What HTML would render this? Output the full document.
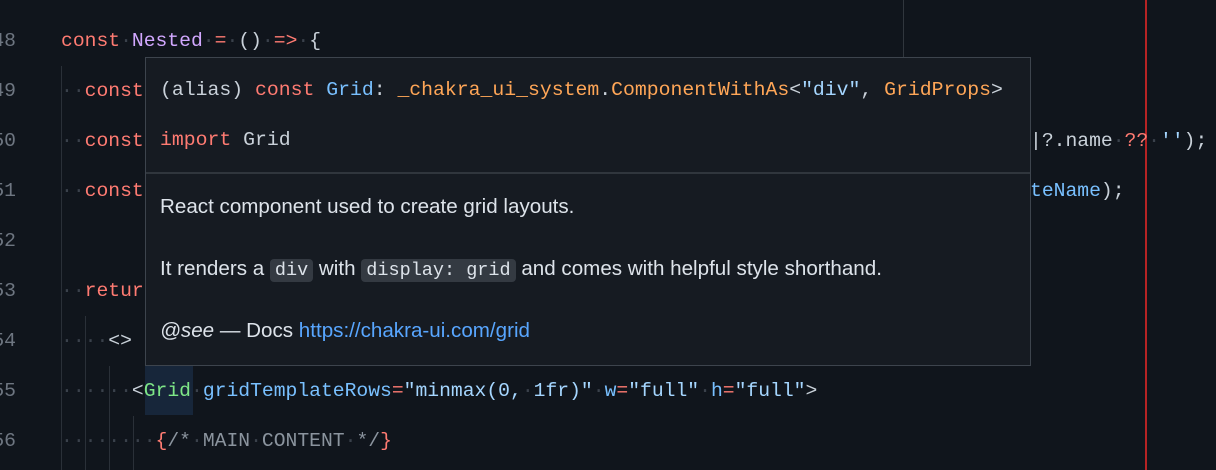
<!DOCTYPE html>
<html><head><meta charset="utf-8"><style>
body{margin:0;width:1216px;height:470px;overflow:hidden;background:#10151c;position:relative;font-family:"Liberation Mono",monospace;font-size:19.7px;color:#c9d1d9}
.l{position:absolute;left:61px;white-space:pre;line-height:24px}
.n{position:absolute;left:-14px;width:30px;text-align:right;color:#6e7681;line-height:24px}
.d{color:#3a414b}.k{color:#ff7b72}.f{color:#d2a8ff}.b{color:#79c0ff}.s{color:#a5d6ff}.g{color:#7ee787}.o{color:#ffa657}.c{color:#8b949e}
.gd{position:absolute;width:1px;background:#2a3038}
#pop{position:absolute;left:145px;top:57px;width:884px;height:307px;background:#161b22;border:1px solid #3d444d}
.pc{position:absolute;left:14px;white-space:pre;font-size:19.8px}
.pr{position:absolute;left:14px;font-family:"Liberation Sans",sans-serif;font-size:20.6px;color:#dde3ea;white-space:pre}
code{font-family:"Liberation Mono",monospace;font-size:18.5px;background:#343a42;border-radius:4px;padding:1px 5px}
</style></head><body>
<div class="gd" style="left:61px;top:66px;height:404px"></div>
<div class="gd" style="left:85px;top:316px;height:154px"></div>
<div class="gd" style="left:109px;top:366px;height:104px"></div>
<div class="gd" style="left:133px;top:416px;height:54px"></div>
<div class="gd" style="left:903px;top:0;height:57px;background:#30363d"></div>
<div style="position:absolute;left:1145px;top:0;width:2px;height:470px;background:#b62324"></div>
<div style="position:absolute;left:145px;top:366px;width:48px;height:49px;background:#17263a"></div>

<div class="n" style="top:29px">48</div><div class="l" style="top:29px"><span class="k">const</span><span class="d">·</span><span class="f">Nested</span><span class="d">·</span><span class="k">=</span><span class="d">·</span>()<span class="d">·</span><span class="k">=&gt;</span><span class="d">·</span>{</div>
<div class="n" style="top:79px">49</div><div class="l" style="top:79px"><span class="d">··</span><span class="k">const</span></div>
<div class="n" style="top:129px">50</div><div class="l" style="top:129px"><span class="d">··</span><span class="k">const</span></div>
<div class="l" style="top:129px;left:1030px">|?.name<span class="d">·</span><span class="k">??</span><span class="d">·</span><span class="s">''</span>);</div>
<div class="n" style="top:179px">51</div><div class="l" style="top:179px"><span class="d">··</span><span class="k">const</span></div>
<div class="l" style="top:179px;left:1030px"><span class="b">teName</span>);</div>
<div class="n" style="top:229px">52</div>
<div class="n" style="top:279px">53</div><div class="l" style="top:279px"><span class="d">··</span><span class="k">return</span></div>
<div class="n" style="top:329px">54</div><div class="l" style="top:329px"><span class="d">····</span>&lt;&gt;</div>
<div class="n" style="top:379px">55</div><div class="l" style="top:379px"><span class="d">······</span>&lt;<span class="g">Grid</span><span class="d">·</span><span class="b">gridTemplateRows</span><span class="k">=</span><span class="s">"minmax(0,</span><span class="d">·</span><span class="s">1fr)"</span><span class="d">·</span><span class="b">w</span><span class="k">=</span><span class="s">"full"</span><span class="d">·</span><span class="b">h</span><span class="k">=</span><span class="s">"full"</span>&gt;</div>
<div class="n" style="top:429px">56</div><div class="l" style="top:429px"><span class="d">········</span><span class="k">{</span><span class="c">/*<span class="d">·</span>MAIN<span class="d">·</span>CONTENT<span class="d">·</span>*/</span><span class="k">}</span></div>

<div id="pop">
<div class="pc" style="top:21px">(alias) <span class="k">const</span> <span class="b">Grid</span>: <span class="o">_chakra_ui_system</span>.<span class="o">ComponentWithAs</span>&lt;<span class="s">"div"</span>, <span class="o">GridProps</span>&gt;</div>
<div class="pc" style="top:71px"><span class="k">import</span> Grid</div>
<div style="position:absolute;left:0;right:0;top:114px;height:2px;background:#30363d"></div>
<div class="pr" style="top:137px">React component used to create grid layouts.</div>
<div class="pr" style="top:199px">It renders a <code>div</code> with <code>display: grid</code> and comes with helpful style shorthand.</div>
<div class="pr" style="top:261px"><i>@see</i> — Docs <span style="color:#58a6ff">https://chakra-ui.com/grid</span></div>
</div>
</body></html>
